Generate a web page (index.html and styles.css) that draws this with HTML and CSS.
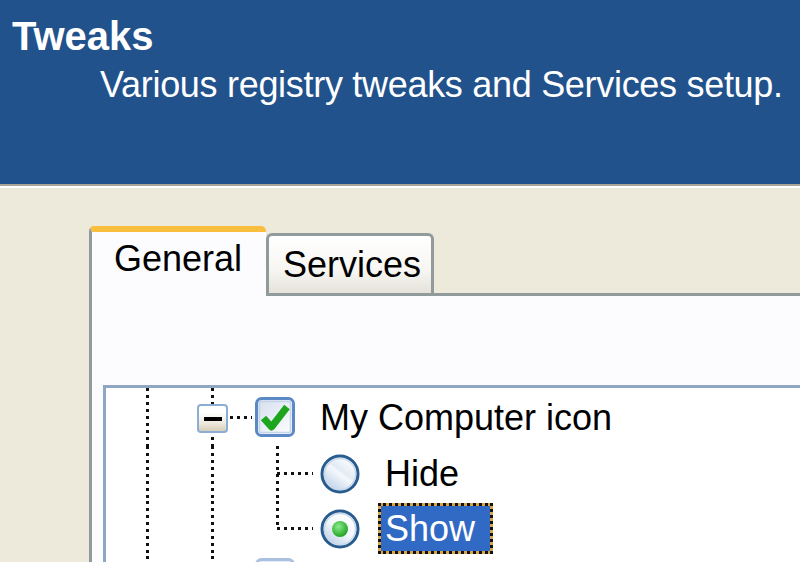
FILE: index.html
```html
<!DOCTYPE html>
<html>
<head>
<meta charset="utf-8">
<title>Tweaks</title>
<link rel="stylesheet" href="styles.css">
</head>
<body>
  <div class="header">
    <div class="title">Tweaks</div>
    <div class="subtitle">Various registry tweaks and Services setup.</div>
  </div>
  <div class="rule"></div>
  <div class="main">
    <div class="tabs">
      <div class="tab tab-active">General</div>
      <div class="tab tab-inactive">Services</div>
    </div>
    <div class="panel">
      <div class="tree">
        <div class="row row-first">
          <div class="cell c1"></div>
          <div class="cell c2 branch">
            <span class="expander"><span class="minus"></span></span>
          </div>
          <svg class="check" width="40" height="40" viewBox="0 0 40 40">
            <defs>
              <linearGradient id="cbg" x1="0" y1="0" x2="1" y2="1">
                <stop offset="0" stop-color="#D3DEEE"/>
                <stop offset="1" stop-color="#FFFFFF"/>
              </linearGradient>
            </defs>
            <rect x="1.5" y="1.5" width="37" height="37" rx="5" fill="url(#cbg)" stroke="#5A89C6" stroke-width="3"/>
            <rect x="4.5" y="4.5" width="31" height="31" rx="2" fill="none" stroke="#C4D4EA" stroke-width="1.5"/>
            <path d="M8.5 21 L16.5 30 L32 10" fill="none" stroke="#1DA61D" stroke-width="7" stroke-linejoin="round"/>
          </svg>
          <span class="label">My Computer icon</span>
        </div>
        <div class="row">
          <div class="cell c1"></div>
          <div class="cell c2"></div>
          <div class="cell c3"></div>
          <svg class="radio" width="40" height="40" viewBox="0 0 40 40">
            <defs>
              <linearGradient id="rbg" x1="0.2" y1="0.9" x2="0.8" y2="0.1">
                <stop offset="0" stop-color="#BFD1E8"/>
                <stop offset="0.5" stop-color="#F4F8FC"/>
                <stop offset="0.6" stop-color="#E2EBF5"/>
                <stop offset="1" stop-color="#FFFFFF"/>
              </linearGradient>
            </defs>
            <circle cx="20" cy="20" r="18" fill="url(#rbg)" stroke="#285B8E" stroke-width="3"/>
            <circle cx="20" cy="20" r="15.5" fill="none" stroke="#C9D9EC" stroke-width="1.5"/>
          </svg>
          <span class="label">Hide</span>
        </div>
        <div class="row">
          <div class="cell c1"></div>
          <div class="cell c2"></div>
          <div class="cell c3 last"></div>
          <svg class="radio" width="40" height="40" viewBox="0 0 40 40">
            <defs>
              <linearGradient id="rbg2" x1="0.2" y1="0.9" x2="0.8" y2="0.1">
                <stop offset="0" stop-color="#BFD1E8"/>
                <stop offset="0.5" stop-color="#F4F8FC"/>
                <stop offset="1" stop-color="#FFFFFF"/>
              </linearGradient>
              <radialGradient id="gdot" cx="0.4" cy="0.35" r="0.7">
                <stop offset="0" stop-color="#8CEB8C"/>
                <stop offset="1" stop-color="#1A9E1A"/>
              </radialGradient>
            </defs>
            <circle cx="20" cy="20" r="18" fill="url(#rbg2)" stroke="#285B8E" stroke-width="3"/>
            <circle cx="20" cy="20" r="15.5" fill="none" stroke="#C9D9EC" stroke-width="1.5"/>
            <circle cx="20" cy="20" r="8" fill="url(#gdot)"/>
          </svg>
          <span class="label selected">Show</span>
        </div>
        <div class="row row-next">
          <div class="cell c1"></div>
          <div class="cell c2"></div>
          <svg class="check check-next" width="40" height="40" viewBox="0 0 40 40">
            <rect x="1.5" y="1.5" width="37" height="37" rx="5" fill="#E6EDF6" stroke="#A9C0DE" stroke-width="3"/>
          </svg>
        </div>
      </div>
    </div>
  </div>
</body>
</html>
```

FILE: styles.css
```css
html, body {
  margin: 0;
  width: 800px;
  height: 562px;
  overflow: hidden;
}

body {
  font-family: "Liberation Sans", Arial, sans-serif;
  background: #EEEADB;
  display: flex;
  flex-direction: column;
  --dv: repeating-linear-gradient(to bottom, #111 0 3px, transparent 3px 7px);
  --dh: repeating-linear-gradient(to right, #111 0 3px, transparent 3px 7px);
}

.header {
  flex: none;
  height: 184px;
  box-sizing: border-box;
  background: #21528C;
  color: #FFFFFF;
  padding: 16px 0 0 12px;
}

.title {
  font-size: 40px;
  line-height: 40px;
  font-weight: bold;
}

.subtitle {
  font-size: 36px;
  line-height: 36px;
  letter-spacing: -0.3px;
  margin: 11px 0 0 88px;
  white-space: nowrap;
}

.rule {
  flex: none;
  height: 2px;
  background: #A9A597;
  border-bottom: 2px solid #FFFFFF;
}

.main {
  flex: 1;
  min-height: 0;
  display: flex;
  flex-direction: column;
  padding: 38px 0 0 89px;
}

.tabs {
  flex: none;
  display: flex;
  align-items: flex-end;
}

.tab {
  box-sizing: border-box;
  font-size: 36px;
  line-height: 36px;
  color: #000;
  white-space: nowrap;
}

.tab-active {
  position: relative;
  z-index: 2;
  width: 177px;
  height: 70px;
  margin-bottom: -3px;
  background: #FCFCFE;
  border-left: 3px solid #919B9C;
  border-top: 6px solid #F9BE3E;
  border-radius: 5px 5px 0 0;
  padding: 9px 0 0 22px;
}

.tab-inactive {
  width: 168px;
  height: 60px;
  border: 3px solid #919B9C;
  border-bottom: none;
  border-radius: 6px 6px 0 0;
  background: linear-gradient(#FFFFFF, #F7F6F2 60%, #E4E2D9);
  padding: 11px 0 0 14px;
}

.panel {
  flex: 1;
  min-height: 0;
  overflow: hidden;
  background: #FCFCFE;
  border-top: 3px solid #919B9C;
  border-left: 3px solid #919B9C;
  padding: 89px 0 0 11px;
}

.tree {
  height: 300px;
  margin-right: -10px;
  background: #FFFFFF;
  border-top: 3px solid #8EA6C4;
  border-left: 3px solid #8EA6C4;
}

.row {
  display: flex;
  align-items: center;
  height: 55px;
}

.row-first {
  height: 58px;
}

.cell {
  flex: none;
  align-self: stretch;
  display: flex;
  align-items: center;
  background-repeat: no-repeat;
}

.c1 {
  width: 91px;
  background-image: var(--dv);
  background-size: 3px 100%;
  background-position: 40px 0;
}

.c2 {
  width: 58px;
  background-image: var(--dv);
  background-size: 3px 100%;
  background-position: 14px 0;
}

.c2.branch {
  background-image: var(--dv), var(--dh);
  background-size: 3px 100%, 22px 3px;
  background-position: 14px 0, 33px 50%;
}

.c3 {
  width: 65px;
  background-image: var(--dv), var(--dh);
  background-size: 3px 100%, 36px 3px;
  background-position: 21px 0, 22px 50%;
}

.c3.last {
  background-size: 3px 50%, 36px 3px;
}

.expander {
  box-sizing: border-box;
  width: 31px;
  height: 29px;
  margin-top: 3px;
  border: 2px solid #8CADD6;
  border-radius: 4px;
  background: linear-gradient(#FFFFFF 25%, #EDE8DC 70%, #D8CFBA);
  display: flex;
  align-items: center;
  justify-content: center;
}

.minus {
  width: 18px;
  height: 4px;
  background: #000;
}

.check, .radio {
  flex: none;
  display: block;
}

.check-next {
  align-self: flex-start;
  margin-top: 2px;
}

.label {
  box-sizing: border-box;
  height: 51px;
  margin-left: 18px;
  padding: 0 15px 0 4px;
  border: 3px solid transparent;
  font-size: 36px;
  line-height: 45px;
  color: #000;
  white-space: nowrap;
}

.label.selected {
  color: #FFFFFF;
  border: 3px dotted #111;
  background: linear-gradient(#316AC5, #316AC5) padding-box, #D9A648 border-box;
}
```
